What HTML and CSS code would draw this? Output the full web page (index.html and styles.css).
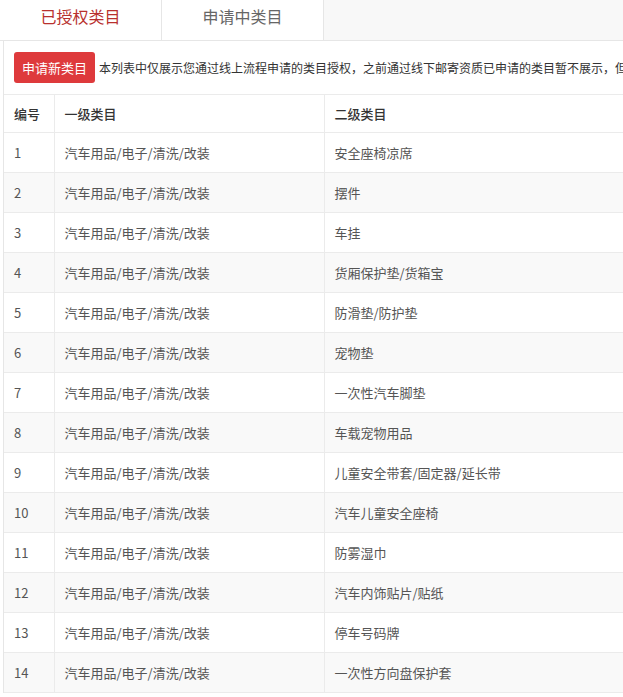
FILE: index.html
```html
<!DOCTYPE html>
<html lang="zh-CN">
<head>
<meta charset="utf-8">
<title>已授权类目</title>
<link rel="stylesheet" href="styles.css">
</head>
<body>
<div class="page">
  <div class="tabs">
    <div class="tab active">已授权类目</div>
    <div class="tab">申请中类目</div>
  </div>
  <div class="content">
    <div class="toolbar">
      <button class="btn">申请新类目</button>
      <span class="tip">本列表中仅展示您通过线上流程申请的类目授权，之前通过线下邮寄资质已申请的类目暂不展示，但</span>
    </div>
    <table class="grid">
      <colgroup><col class="c1"><col class="c2"><col class="c3"></colgroup>
      <thead>
        <tr><th>编号</th><th>一级类目</th><th>二级类目</th></tr>
      </thead>
      <tbody>
        <tr><td>1</td><td>汽车用品/电子/清洗/改装</td><td>安全座椅凉席</td></tr>
        <tr><td>2</td><td>汽车用品/电子/清洗/改装</td><td>摆件</td></tr>
        <tr><td>3</td><td>汽车用品/电子/清洗/改装</td><td>车挂</td></tr>
        <tr><td>4</td><td>汽车用品/电子/清洗/改装</td><td>货厢保护垫/货箱宝</td></tr>
        <tr><td>5</td><td>汽车用品/电子/清洗/改装</td><td>防滑垫/防护垫</td></tr>
        <tr><td>6</td><td>汽车用品/电子/清洗/改装</td><td>宠物垫</td></tr>
        <tr><td>7</td><td>汽车用品/电子/清洗/改装</td><td>一次性汽车脚垫</td></tr>
        <tr><td>8</td><td>汽车用品/电子/清洗/改装</td><td>车载宠物用品</td></tr>
        <tr><td>9</td><td>汽车用品/电子/清洗/改装</td><td>儿童安全带套/固定器/延长带</td></tr>
        <tr><td>10</td><td>汽车用品/电子/清洗/改装</td><td>汽车儿童安全座椅</td></tr>
        <tr><td>11</td><td>汽车用品/电子/清洗/改装</td><td>防雾湿巾</td></tr>
        <tr><td>12</td><td>汽车用品/电子/清洗/改装</td><td>汽车内饰贴片/贴纸</td></tr>
        <tr><td>13</td><td>汽车用品/电子/清洗/改装</td><td>停车号码牌</td></tr>
        <tr><td>14</td><td>汽车用品/电子/清洗/改装</td><td>一次性方向盘保护套</td></tr>
      </tbody>
    </table>
  </div>
</div>
</body>
</html>
```
FILE: styles.css
```css
html, body {
  margin: 0;
  padding: 0;
  background: #fff;
  overflow: hidden;
}
body {
  font-family: "Noto Sans CJK SC", "Noto Sans", sans-serif;
  color: #555;
}
.page {
  width: 1000px;
}
.tabs {
  display: flex;
  height: 40px;
  background: #f8f8f8;
  border-bottom: 1px solid #e6e6e6;
}
.tab {
  width: 162px;
  background: #fff;
  border-right: 1px solid #e6e6e6;
  display: flex;
  align-items: center;
  justify-content: center;
  padding-bottom: 8px;
  box-sizing: border-box;
  font-size: 16px;
  color: #666;
}
.tab.active {
  color: #b8302e;
}
.content {
  margin-left: 3px;
  border-left: 1px solid #e6e6e6;
}
.toolbar {
  display: flex;
  align-items: center;
  height: 53px;
  padding: 0 10px 1px;
  box-sizing: border-box;
  white-space: nowrap;
  overflow: hidden;
}
.btn {
  height: 31px;
  padding: 0 8px;
  border: 0;
  border-radius: 3px;
  background: #de3a3c;
  color: #fff;
  font-family: inherit;
  font-size: 13px;
  line-height: 31px;
}
.tip {
  margin-left: 4px;
  font-size: 12px;
  color: #333;
}
.grid {
  border-collapse: collapse;
  table-layout: fixed;
  width: 996px;
  font-size: 13px;
}
.c1 { width: 50px; }
.c2 { width: 270px; }
.grid th, .grid td {
  border-top: 1px solid #ebebeb;
  border-bottom: 1px solid #ebebeb;
  border-right: 1px solid #ebebeb;
  text-align: left;
  padding: 0 10px;
  white-space: nowrap;
}
.grid th {
  height: 37px;
  font-weight: 500;
  color: #333;
}
.grid td {
  height: 39px;
  color: #555;
}
.grid tbody tr:nth-child(even) td {
  background: #f9f9f9;
}
```
